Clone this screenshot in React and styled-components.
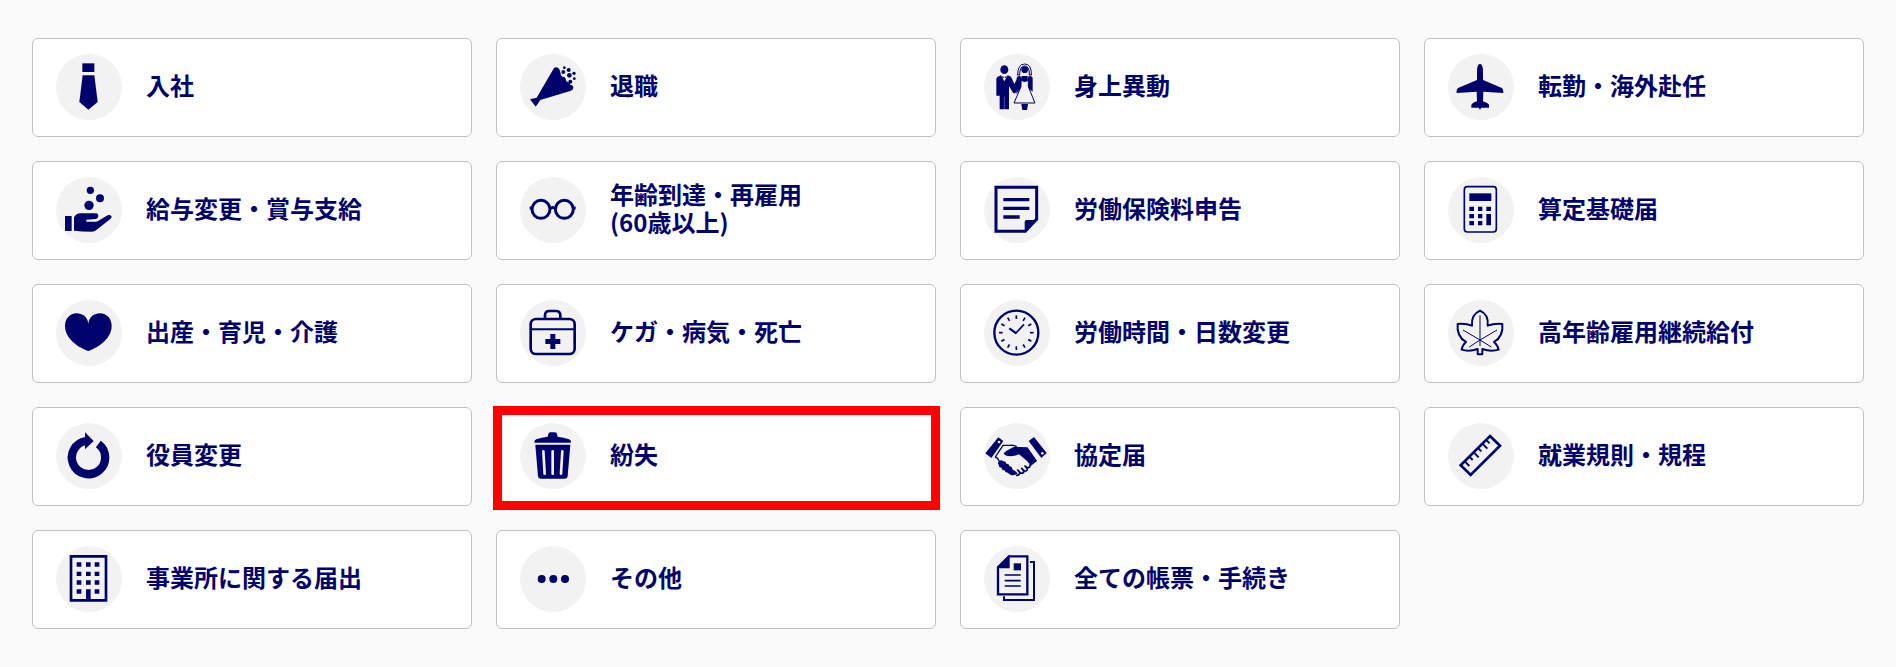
import React from "react"
import styled, { createGlobalStyle, css } from 'styled-components';

const NAVY = '#00006b';
const ICON_BG = '#f2f2f2';

const GlobalStyle = createGlobalStyle`
  * {
    box-sizing: border-box;
  }
  body {
    margin: 0;
    background-color: #fafafa;
    font-family: "Noto Sans CJK JP", sans-serif;
  }
`;

const Main = styled.main`
  padding: 38px 32px;
`;

const MenuGrid = styled.ul`
  display: grid;
  grid-template-columns: repeat(4, minmax(0, 1fr));
  gap: 24px;
  margin: 0;
  padding: 0;
  list-style: none;
`;

const MenuLink = styled.a`
  position: relative;
  display: flex;
  align-items: center;
  gap: 24px;
  padding: 15px 23px 16px;
  background-color: #ffffff;
  border: 1px solid #c0c0c0;
  border-radius: 6px;
  color: ${NAVY};
  font-size: 24px;
  font-weight: 700;
  line-height: 28px;
  text-decoration: none;

  ${({ $marked }) => $marked && css`
    &::after {
      content: "";
      position: absolute;
      inset: -2px -5px -5px -4px;
      border: 9px solid #ff0000;
    }
  `}
`;

const IconCircle = styled.span`
  flex: none;
  display: flex;
  width: 66px;
  height: 66px;
  border-radius: 50%;
  background-color: ${ICON_BG};
`;

const IconSvg = styled.svg`
  width: 100%;
  height: 100%;
  overflow: visible;
  fill: ${NAVY};
`;

const Label = styled.span`
  padding-bottom: 4px;
  white-space: pre-line;
`;

const line = { fill: 'none', stroke: NAVY };

const TieIcon = () => (
    <>
        <path d="M79 28h36v26H79z" />
        <path d="M80 64h35l10 80-28 23-27-23z" />
    </>
);

const PartyIcon = () => (
    <>
        <path d="M30 136l20-5 49-84q3-7 9-7 7 0 10 6l4 12q-1 8 5 10 8-1 10 6 0 8 6 10 7 0 7 8 10 1 10 9 0 6-7 9l-92 28-14 20z" />
        <circle cx="133" cy="41" r="4" />
        <circle cx="146" cy="48" r="6" />
        <circle cx="130" cy="54" r="6" />
        <circle cx="162" cy="58" r="5" />
        <circle cx="148" cy="64" r="7" />
        <circle cx="163" cy="74" r="4" />
        <circle cx="151" cy="83" r="6" />
    </>
);

const CoupleIcon = () => (
    <>
        <ellipse cx="61" cy="47" rx="12" ry="13" />
        <path d="M41 68l10-4 10 18 10-18 10 4 10 22 9-17 8 2-1 17-12 24q-4 4-8 0l-12-20v70H47v-41H37V75q0-5 4-7z" />
        <path d="M55 66l6 4 6-4v7l-6-3-6 3z" />
        <circle cx="122" cy="47" r="10" />
        <path d="M101 63q0-33 21-33t20 33M107 63q0-27 15-27t14 27" strokeWidth="3" {...line} />
        <path d="M99 63h9M135 63h8" strokeWidth="3" {...line} />
        <path d="M98 71q2-5 8-5l6 2 4 16-5 18-14 18zM146 71q-2-5-8-5l-6 2-4 16 5 18 13 11z" />
        <path d="M111 80h22v18l20 49H90l21-49z" fill={ICON_BG} stroke={NAVY} strokeWidth="3" />
        <path d="M113 66h18v12q-2 6-9 6t-9-6zM112 150h20l-3 18h-14z" />
        <path d="M61 128v40" stroke={ICON_BG} strokeWidth="1" />
    </>
);

const PlaneIcon = () => (
    <path d="M96 29q9 3 9 22v27l55 23q7 4 6 16l-60-4-1 29q17 6 18 11v8h-23l-4 6-4-6H70v-8q2-6 17-11l-1-29-60 4q-2-12 6-16l55-23V51q0-19 9-22z" />
);

const CoinHandIcon = () => (
    <>
        <circle cx="103" cy="40" r="11" />
        <circle cx="132" cy="64" r="12" />
        <circle cx="99" cy="85" r="14" />
        <path d="M27 117h20v45H27z" />
        <path d="M54 121q7-12 19-12h48q6 1 6 8 0 6-7 9l-29 2v6h28q7 0 12-5l24-14q9-4 12 4 0 4-5 8l-41 32q-5 5-14 5-28 0-53-3z" />
    </>
);

const GlassesIcon = () => (
    <g strokeWidth="9" {...line}>
        <circle cx="63" cy="97" r="27" />
        <circle cx="133" cy="97" r="27" />
        <path d="M89 95q9-7 18 0M29 93h9M158 93h9" />
    </g>
);

const NoteIcon = () => (
    <>
        <path d="M36 31h122v95l-34 37H36z" strokeWidth="9" {...line} />
        <path d="M58 68h78M58 94h78M58 120h49" strokeWidth="10" {...line} />
        <path d="M162 129h-34q-6 0-6 6v32z" />
    </>
);

const CalculatorIcon = () => (
    <>
        <rect x="49" y="29" width="96" height="136" rx="9" strokeWidth="5" {...line} />
        <path d="M64 49h66v23H64z" />
        <path d="M64 89h14v13H64zM90 89h13v13H90zM115 89h14v13h-14zM64 111h14v13H64zM90 111h13v13H90zM115 111h14v34h-14zM64 132h14v13H64zM90 132h13v13H90z" />
    </>
);

const HeartIcon = () => (
    <path d="M97 72C99 50 115 40 132 40c21 0 35 17 35 38 0 35-34 62-70 75-36-13-70-40-70-75 0-21 14-38 35-38 17 0 33 10 35 32z" />
);

const FirstAidIcon = () => (
    <>
        <rect x="32" y="57" width="132" height="105" rx="16" strokeWidth="8" {...line} />
        <path d="M32 88h132" strokeWidth="6" {...line} />
        <path d="M75 57V46q0-13 13-13h20q13 0 13 13v11" strokeWidth="8" {...line} />
        <path d="M91 102h15v15h15v15h-15v15H91v-15H76v-15h15z" />
    </>
);

const ClockIcon = () => (
    <>
        <circle cx="97" cy="98" r="66" strokeWidth="7" {...line} />
        {[...Array(12)].map((_, i) => (
            <path key={i} d="M97 46v11" transform={`rotate(${i * 30} 97 98)`} strokeWidth="5" {...line} />
        ))}
        <path d="M76 85l21 15" strokeWidth="7" {...line} />
        <path d="M94 101l26-28" strokeWidth="5" {...line} />
    </>
);

const LeafIcon = () => (
    <>
        <path
            d="M96 32q27 12 23 45 19-7 44-5 4 37-25 54 11 9 14 23-23 7-49-2v16H89v-16q-26 9-48 2 2-14 13-23-29-17-25-54 25-2 43 5-3-33 24-45z"
            strokeWidth="6"
            strokeLinejoin="round"
            {...line}
        />
        <path d="M96 46v92M45 90l51 30 51-30M64 141l32-21 34 21" strokeWidth="3" {...line} />
    </>
);

const RefreshIcon = () => (
    <>
        <path d="M90 54A50 50 0 1 0 127 63" strokeWidth="25" {...line} />
        <path d="M87 28l26 26-26 25z" />
    </>
);

const TrashIcon = () => (
    <>
        <path d="M43 59q-1-7 6-10 16-6 34-8l2-8q1-5 6-5h14q5 0 6 5l2 8q18 2 34 8 7 3 6 10z" />
        <path d="M46 65h105l-8 94q-1 8-9 8H63q-8 0-9-8z" />
        <path d="M70 85l4 67M98 85v67M127 85l-4 67" fill="none" stroke={ICON_BG} strokeWidth="8" strokeLinecap="round" />
    </>
);

const HandshakeIcon = () => (
    <>
        <path d="M43 43l15 11-36 51L4 91zM150 42l-16 12 38 51 16-15z" />
        <circle cx="45" cy="57" r="4" fill={ICON_BG} />
        <circle cx="175" cy="91" r="4" fill={ICON_BG} />
        {/* right hand with its thumb over the left one */}
        <path d="M87 73q7-3 16-1l27 1 29 41q-12 2-18 10l-36-30q-16 7-32 5-12-1-14-8 4-6 28-18z" />
        <path d="M98 71q-7-5-20-4H57l-23 35q7 2 12 13" strokeWidth="4" strokeLinejoin="round" {...line} />
        <path d="M46 113q7-4 11 2 9-1 10 7 9-1 9 8 9 0 9 9 8 4 16 12-11 9-22 4l-8-6q-8 0-9-7-9 0-9-8-9 0-8-8-7-5 1-13z" />
        <path
            d="M96 157q9 1 12-7l-7-9 9 9q9 2 10-4l-7-10 9 8q8 1 8-6l-7-9 8 6q9-2 7-12"
            strokeWidth="5"
            strokeLinejoin="round"
            {...line}
        />
        <path d="M130 73l6 9 23 32-18 14-10-12z" />
    </>
);

const RulerIcon = () => (
    <>
        <path d="M126 39l30 29-88 88-30-29z" strokeWidth="8" {...line} />
        <path d="M51 116l13 13M65 102l9 9M78 89l14 14M91 76l9 9M104 63l14 14M116 52l9 9" strokeWidth="6" {...line} />
    </>
);

const BuildingIcon = () => (
    <>
        <path d="M45 31h105v132H45z" strokeWidth="8" {...line} />
        {[49, 77, 103].map((y) => (
            <path key={y} d={`M62 ${y}h14v13H62zM90 ${y}h14v13H90zM116 ${y}h14v13h-14z`} />
        ))}
        <path d="M62 130h14v13H62zM116 130h14v13h-14zM90 130h14v34H90z" />
    </>
);

const DotsIcon = () => (
    <>
        <circle cx="65" cy="99" r="12" />
        <circle cx="100" cy="99" r="12" />
        <circle cx="135" cy="99" r="12" />
    </>
);

const DocumentsIcon = () => (
    <>
        <path d="M75 31h55v114H42V64z" strokeWidth="7" {...line} />
        <path d="M77 28v39H40v-4l35-36z" />
        <path d="M89 52h22v21H89z" />
        <path d="M62 87h48M62 104h48M62 120h48" strokeWidth="5" {...line} />
        <path d="M138 48h12v114H60v-11" strokeWidth="6" {...line} />
    </>
);

const menus = [
    { label: "入社", icon: TieIcon },
    { label: "退職", icon: PartyIcon },
    { label: "身上異動", icon: CoupleIcon },
    { label: "転勤・海外赴任", icon: PlaneIcon },
    { label: "給与変更・賞与支給", icon: CoinHandIcon },
    { label: "年齢到達・再雇用\n(60歳以上)", icon: GlassesIcon },
    { label: "労働保険料申告", icon: NoteIcon },
    { label: "算定基礎届", icon: CalculatorIcon },
    { label: "出産・育児・介護", icon: HeartIcon },
    { label: "ケガ・病気・死亡", icon: FirstAidIcon },
    { label: "労働時間・日数変更", icon: ClockIcon },
    { label: "高年齢雇用継続給付", icon: LeafIcon },
    { label: "役員変更", icon: RefreshIcon },
    { label: "紛失", icon: TrashIcon, marked: true },
    { label: "協定届", icon: HandshakeIcon },
    { label: "就業規則・規程", icon: RulerIcon },
    { label: "事業所に関する届出", icon: BuildingIcon },
    { label: "その他", icon: DotsIcon },
    { label: "全ての帳票・手続き", icon: DocumentsIcon },
];

const App = () => {
    return (
        <Main lang="ja">
            <GlobalStyle />
            <MenuGrid>
                {menus.map(({ label, icon: Icon, marked }) => (
                    <li key={label}>
                        <MenuLink href="#" $marked={marked}>
                            <IconCircle>
                                <IconSvg viewBox="0 0 198 198" aria-hidden="true">
                                    <Icon />
                                </IconSvg>
                            </IconCircle>
                            <Label>{label}</Label>
                        </MenuLink>
                    </li>
                ))}
            </MenuGrid>
        </Main>
    );
}

export default App;
